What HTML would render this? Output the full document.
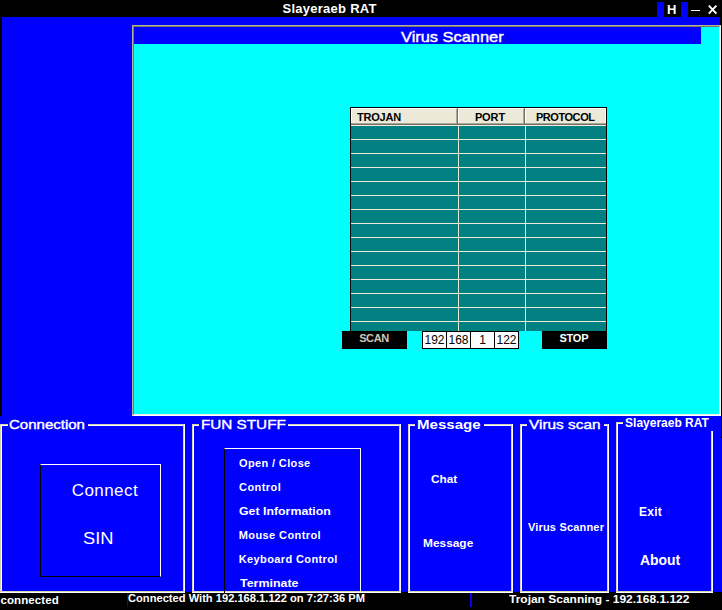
<!DOCTYPE html>
<html><head><meta charset="utf-8"><style>
html,body{margin:0;padding:0;}
body{width:722px;height:610px;background:#000;position:relative;overflow:hidden;font-family:"Liberation Sans",sans-serif;}
.r{position:absolute;}
.t{position:absolute;white-space:nowrap;}
</style></head><body>
<div class="r" style="left:0px;top:17px;width:722px;height:575px;background:#0000ff"></div>
<div class="r" style="left:0px;top:17px;width:2px;height:399px;background:#000"></div>
<div class="r" style="left:721px;top:17px;width:1px;height:421px;background:#000"></div>
<div class="r" style="left:720px;top:17px;width:1px;height:8px;background:#000"></div>
<div class="r" style="left:657px;top:2px;width:7px;height:15px;background:#0000ff"></div>
<div class="r" style="left:681px;top:2px;width:7px;height:15px;background:#0000ff"></div>
<div class="r" style="left:691px;top:10px;width:9px;height:1px;background:#fff"></div>
<svg class="r" style="left:707px;top:4px" width="11" height="11"><path d="M1.8 1.6L9.4 9.6M9.4 1.6L1.8 9.6" stroke="#fff" stroke-width="1.9"/></svg>
<div class="r" style="left:132px;top:25px;width:589px;height:391px;box-sizing:border-box;background:#00ffff;border-top:1px solid #b4b096;border-left:1px solid #b4b096;border-right:1px solid #fff;border-bottom:1px solid #fff"></div>
<div class="r" style="left:133px;top:26px;width:587px;height:389px;box-sizing:border-box;border-top:1px solid #7a7766;border-left:1px solid #7a7766;border-right:1px solid #f1efe2;border-bottom:1px solid #f1efe2"></div>
<div class="r" style="left:134px;top:27px;width:567px;height:17px;background:#0000ff"></div>
<div class="r" style="left:350px;top:107px;width:257px;height:224px;background:#008080;box-sizing:border-box;border:1px solid #000;border-bottom:none"></div>
<div class="r" style="left:351px;top:108px;width:255px;height:18px;background:#ece9d8"></div>
<div class="r" style="left:351px;top:108px;width:255px;height:1px;background:#fff"></div>
<div class="r" style="left:351px;top:108px;width:1px;height:16px;background:#fff"></div>
<div class="r" style="left:605px;top:108px;width:1px;height:16px;background:#fbf8ee"></div>
<div class="r" style="left:351px;top:123px;width:255px;height:1px;background:#aca899"></div>
<div class="r" style="left:351px;top:124px;width:255px;height:1px;background:#716f64"></div>
<div class="r" style="left:351px;top:125px;width:255px;height:1px;background:#f1efe2"></div>
<div class="r" style="left:456px;top:109px;width:1px;height:14px;background:#aca899"></div>
<div class="r" style="left:457px;top:108px;width:1px;height:16px;background:#716f64"></div>
<div class="r" style="left:458px;top:108px;width:1px;height:15px;background:#fff"></div>
<div class="r" style="left:523px;top:109px;width:1px;height:14px;background:#aca899"></div>
<div class="r" style="left:524px;top:108px;width:1px;height:16px;background:#716f64"></div>
<div class="r" style="left:525px;top:108px;width:1px;height:15px;background:#fff"></div>
<div class="r" style="left:458px;top:126px;width:1px;height:205px;background:#ece9d8"></div>
<div class="r" style="left:525px;top:126px;width:1px;height:205px;background:#ece9d8"></div>
<div class="r" style="left:351px;top:139px;width:255px;height:1px;background:#ece9d8"></div>
<div class="r" style="left:351px;top:153px;width:255px;height:1px;background:#ece9d8"></div>
<div class="r" style="left:351px;top:167px;width:255px;height:1px;background:#ece9d8"></div>
<div class="r" style="left:351px;top:181px;width:255px;height:1px;background:#ece9d8"></div>
<div class="r" style="left:351px;top:195px;width:255px;height:1px;background:#ece9d8"></div>
<div class="r" style="left:351px;top:209px;width:255px;height:1px;background:#ece9d8"></div>
<div class="r" style="left:351px;top:223px;width:255px;height:1px;background:#ece9d8"></div>
<div class="r" style="left:351px;top:237px;width:255px;height:1px;background:#ece9d8"></div>
<div class="r" style="left:351px;top:251px;width:255px;height:1px;background:#ece9d8"></div>
<div class="r" style="left:351px;top:265px;width:255px;height:1px;background:#ece9d8"></div>
<div class="r" style="left:351px;top:279px;width:255px;height:1px;background:#ece9d8"></div>
<div class="r" style="left:351px;top:293px;width:255px;height:1px;background:#ece9d8"></div>
<div class="r" style="left:351px;top:307px;width:255px;height:1px;background:#ece9d8"></div>
<div class="r" style="left:351px;top:321px;width:255px;height:1px;background:#ece9d8"></div>
<div class="r" style="left:342px;top:331px;width:65px;height:18px;background:#000"></div>
<div class="r" style="left:542px;top:331px;width:65px;height:18px;background:#000"></div>
<div class="r" style="left:422px;top:331px;width:25px;height:18px;background:#fff;box-sizing:border-box;border:1px solid #000"></div>
<div class="t" style="left:422px;width:25px;text-align:center;top:334.14px;font-size:12px;line-height:12px;color:#000">192</div>
<div class="r" style="left:446px;top:331px;width:25px;height:18px;background:#fff;box-sizing:border-box;border:1px solid #000"></div>
<div class="t" style="left:446px;width:25px;text-align:center;top:334.14px;font-size:12px;line-height:12px;color:#000">168</div>
<div class="r" style="left:470px;top:331px;width:25px;height:18px;background:#fff;box-sizing:border-box;border:1px solid #000"></div>
<div class="t" style="left:470px;width:25px;text-align:center;top:334.14px;font-size:12px;line-height:12px;color:#000">1</div>
<div class="r" style="left:494px;top:331px;width:25px;height:18px;background:#fff;box-sizing:border-box;border:1px solid #000"></div>
<div class="t" style="left:494px;width:25px;text-align:center;top:334.14px;font-size:12px;line-height:12px;color:#000">122</div>
<div class="r" style="left:0px;top:424px;width:1px;height:169px;background:#d6d3b4"></div>
<div class="r" style="left:1px;top:425px;width:1px;height:168px;background:#fff"></div>
<div class="r" style="left:183px;top:424px;width:1px;height:169px;background:#d6d3b4"></div>
<div class="r" style="left:184px;top:424px;width:1px;height:169px;background:#fff"></div>
<div class="r" style="left:0px;top:591px;width:185px;height:1px;background:#d6d3b4"></div>
<div class="r" style="left:0px;top:592px;width:185px;height:1px;background:#fff"></div>
<div class="r" style="left:0px;top:424px;width:8px;height:1px;background:#d6d3b4"></div>
<div class="r" style="left:1px;top:425px;width:7px;height:1px;background:#fff"></div>
<div class="r" style="left:88px;top:424px;width:95px;height:1px;background:#d6d3b4"></div>
<div class="r" style="left:88px;top:425px;width:95px;height:1px;background:#fff"></div>
<div class="r" style="left:192px;top:424px;width:1px;height:169px;background:#d6d3b4"></div>
<div class="r" style="left:193px;top:425px;width:1px;height:168px;background:#fff"></div>
<div class="r" style="left:399px;top:424px;width:1px;height:169px;background:#d6d3b4"></div>
<div class="r" style="left:400px;top:424px;width:1px;height:169px;background:#fff"></div>
<div class="r" style="left:192px;top:591px;width:209px;height:1px;background:#d6d3b4"></div>
<div class="r" style="left:192px;top:592px;width:209px;height:1px;background:#fff"></div>
<div class="r" style="left:192px;top:424px;width:7px;height:1px;background:#d6d3b4"></div>
<div class="r" style="left:193px;top:425px;width:6px;height:1px;background:#fff"></div>
<div class="r" style="left:288px;top:424px;width:111px;height:1px;background:#d6d3b4"></div>
<div class="r" style="left:288px;top:425px;width:111px;height:1px;background:#fff"></div>
<div class="r" style="left:408px;top:424px;width:1px;height:169px;background:#d6d3b4"></div>
<div class="r" style="left:409px;top:425px;width:1px;height:168px;background:#fff"></div>
<div class="r" style="left:511px;top:424px;width:1px;height:169px;background:#d6d3b4"></div>
<div class="r" style="left:512px;top:424px;width:1px;height:169px;background:#fff"></div>
<div class="r" style="left:408px;top:591px;width:105px;height:1px;background:#d6d3b4"></div>
<div class="r" style="left:408px;top:592px;width:105px;height:1px;background:#fff"></div>
<div class="r" style="left:408px;top:424px;width:7px;height:1px;background:#d6d3b4"></div>
<div class="r" style="left:409px;top:425px;width:6px;height:1px;background:#fff"></div>
<div class="r" style="left:484px;top:424px;width:27px;height:1px;background:#d6d3b4"></div>
<div class="r" style="left:484px;top:425px;width:27px;height:1px;background:#fff"></div>
<div class="r" style="left:520px;top:424px;width:1px;height:169px;background:#d6d3b4"></div>
<div class="r" style="left:521px;top:425px;width:1px;height:168px;background:#fff"></div>
<div class="r" style="left:607px;top:424px;width:1px;height:169px;background:#d6d3b4"></div>
<div class="r" style="left:608px;top:424px;width:1px;height:169px;background:#fff"></div>
<div class="r" style="left:520px;top:591px;width:89px;height:1px;background:#d6d3b4"></div>
<div class="r" style="left:520px;top:592px;width:89px;height:1px;background:#fff"></div>
<div class="r" style="left:520px;top:424px;width:7px;height:1px;background:#d6d3b4"></div>
<div class="r" style="left:521px;top:425px;width:6px;height:1px;background:#fff"></div>
<div class="r" style="left:604px;top:424px;width:3px;height:1px;background:#d6d3b4"></div>
<div class="r" style="left:604px;top:425px;width:3px;height:1px;background:#fff"></div>
<div class="r" style="left:616px;top:422px;width:1px;height:171px;background:#d6d3b4"></div>
<div class="r" style="left:617px;top:423px;width:1px;height:170px;background:#fff"></div>
<div class="r" style="left:711px;top:431px;width:1px;height:162px;background:#d6d3b4"></div>
<div class="r" style="left:712px;top:431px;width:1px;height:162px;background:#fff"></div>
<div class="r" style="left:616px;top:591px;width:97px;height:1px;background:#d6d3b4"></div>
<div class="r" style="left:616px;top:592px;width:97px;height:1px;background:#fff"></div>
<div class="r" style="left:616px;top:422px;width:7px;height:1px;background:#d6d3b4"></div>
<div class="r" style="left:617px;top:423px;width:6px;height:1px;background:#fff"></div>
<div class="r" style="left:40px;top:464px;width:121px;height:113px;box-sizing:border-box;border-top:1px solid #fff;border-right:1px solid #fff;border-left:1px solid #000;border-bottom:1px solid #000"></div>
<div class="r" style="left:224px;top:448px;width:137px;height:145px;box-sizing:border-box;border-top:1px solid #fff;border-right:1px solid #fff;border-left:1px solid #000"></div>
<div class="r" style="left:0px;top:593px;width:722px;height:17px;background:#000"></div>
<div class="r" style="left:127px;top:593px;width:1px;height:14px;background:#0000ff"></div>
<div class="r" style="left:470px;top:593px;width:2px;height:14px;background:#0000ff"></div>
<div class="t" style="left:282.5px;top:2.00px;font-size:13px;line-height:13px;font-weight:bold;color:#fff;letter-spacing:0.262px;">Slayeraeb RAT</div>
<div class="t" style="left:667.0px;top:3.00px;font-size:13px;line-height:13px;font-weight:bold;color:#fff;letter-spacing:0.0px;">H</div>
<div class="t" style="left:401.1px;top:29.00px;font-size:15px;line-height:15px;font-weight:normal;color:#fff;letter-spacing:0.0px;-webkit-text-stroke:0.4px #fff;transform:scaleX(1.0928);transform-origin:0 0;">Virus Scanner</div>
<div class="t" style="left:357.0px;top:112.00px;font-size:11px;line-height:11px;font-weight:bold;color:#000;letter-spacing:-0.22px;">TROJAN</div>
<div class="t" style="left:474.9px;top:112.00px;font-size:11px;line-height:11px;font-weight:bold;color:#000;letter-spacing:-0.117px;">PORT</div>
<div class="t" style="left:535.9px;top:112.00px;font-size:11px;line-height:11px;font-weight:bold;color:#000;letter-spacing:-0.436px;">PROTOCOL</div>
<div class="t" style="left:359.2px;top:333.00px;font-size:11px;line-height:11px;font-weight:bold;color:#ccc8b4;letter-spacing:-0.417px;">SCAN</div>
<div class="t" style="left:559.5px;top:333.00px;font-size:11px;line-height:11px;font-weight:bold;color:#fff;letter-spacing:-0.25px;">STOP</div>
<div class="t" style="left:9.4px;top:418.00px;font-size:13.5px;line-height:13.5px;font-weight:normal;color:#fff;letter-spacing:0.0px;-webkit-text-stroke:0.4px #fff;transform:scaleX(1.1123);transform-origin:0 0;">Connection</div>
<div class="t" style="left:200.5px;top:418.00px;font-size:13.5px;line-height:13.5px;font-weight:normal;color:#fff;letter-spacing:0.0px;-webkit-text-stroke:0.4px #fff;transform:scaleX(1.1308);transform-origin:0 0;">FUN STUFF</div>
<div class="t" style="left:416.8px;top:418.00px;font-size:13px;line-height:13px;font-weight:bold;color:#fff;letter-spacing:0.0px;transform:scaleX(1.1591);transform-origin:0 0;">Message</div>
<div class="t" style="left:529.2px;top:418.00px;font-size:13.5px;line-height:13.5px;font-weight:normal;color:#fff;letter-spacing:0.0px;-webkit-text-stroke:0.4px #fff;transform:scaleX(1.139);transform-origin:0 0;">Virus scan</div>
<div class="t" style="left:625.1px;top:417.00px;font-size:12px;line-height:12px;font-weight:bold;color:#fff;letter-spacing:-0.004px;">Slayeraeb RAT</div>
<div class="t" style="left:71.8px;top:482.00px;font-size:17px;line-height:17px;font-weight:normal;color:#fff;letter-spacing:0.417px;">Connect</div>
<div class="t" style="left:82.9px;top:530.00px;font-size:17px;line-height:17px;font-weight:normal;color:#fff;letter-spacing:0.0px;transform:scaleX(1.0781);transform-origin:0 0;">SIN</div>
<div class="t" style="left:239.1px;top:458.00px;font-size:11px;line-height:11px;font-weight:bold;color:#fff;letter-spacing:0.355px;">Open / Close</div>
<div class="t" style="left:239.1px;top:482.00px;font-size:11px;line-height:11px;font-weight:bold;color:#fff;letter-spacing:0.433px;">Control</div>
<div class="t" style="left:239.0px;top:506.00px;font-size:11px;line-height:11px;font-weight:bold;color:#fff;letter-spacing:0.0px;transform:scaleX(1.122);transform-origin:0 0;">Get Information</div>
<div class="t" style="left:238.8px;top:530.00px;font-size:11px;line-height:11px;font-weight:bold;color:#fff;letter-spacing:0.4px;">Mouse Control</div>
<div class="t" style="left:238.8px;top:554.00px;font-size:11px;line-height:11px;font-weight:bold;color:#fff;letter-spacing:0.38px;">Keyboard Control</div>
<div class="t" style="left:239.6px;top:578.00px;font-size:11px;line-height:11px;font-weight:bold;color:#fff;letter-spacing:0.0px;transform:scaleX(1.1301);transform-origin:0 0;">Terminate</div>
<div class="t" style="left:431.1px;top:474.00px;font-size:11px;line-height:11px;font-weight:bold;color:#fff;letter-spacing:0.0px;transform:scaleX(1.0695);transform-origin:0 0;">Chat</div>
<div class="t" style="left:423.1px;top:538.00px;font-size:11px;line-height:11px;font-weight:bold;color:#fff;letter-spacing:0.0px;transform:scaleX(1.0813);transform-origin:0 0;">Message</div>
<div class="t" style="left:527.9px;top:522.00px;font-size:11px;line-height:11px;font-weight:bold;color:#fff;letter-spacing:0.188px;">Virus Scanner</div>
<div class="t" style="left:639.0px;top:506.00px;font-size:12px;line-height:12px;font-weight:bold;color:#fff;letter-spacing:0.25px;">Exit</div>
<div class="t" style="left:640.0px;top:553.00px;font-size:14px;line-height:14px;font-weight:bold;color:#fff;letter-spacing:0.0px;transform:scaleX(0.995);transform-origin:0 0;">About</div>
<div class="t" style="left:0.5px;top:595.00px;font-size:11.5px;line-height:11.5px;font-weight:bold;color:#fff;letter-spacing:0.094px;">connected</div>
<div class="t" style="left:128.4px;top:594.00px;font-size:10px;line-height:10px;font-weight:bold;color:#fff;letter-spacing:0.0px;transform:scaleX(1.1136);transform-origin:0 0;">Connected With 192.168.1.122 on 7:27:36 PM</div>
<div class="t" style="left:509.4px;top:594.00px;font-size:11px;line-height:11px;font-weight:bold;color:#fff;letter-spacing:0.0px;transform:scaleX(1.0887);transform-origin:0 0;">Trojan Scanning - 192.168.1.122</div>
</body></html>
